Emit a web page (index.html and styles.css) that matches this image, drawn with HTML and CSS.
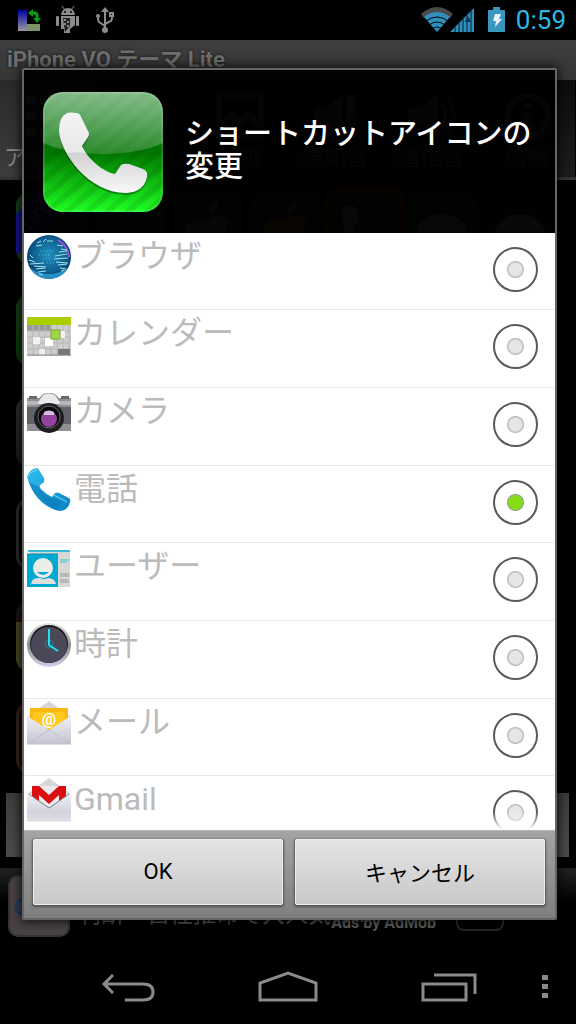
FILE: index.html
```html
<!DOCTYPE html>
<html lang="ja">
<head>
    <meta charset="UTF-8">
    <meta name="viewport" content="width=device-width, initial-scale=1.0">
    <title>iPhone VO テーマ Lite</title>
    <link rel="stylesheet" href="styles.css">
</head>
<body>
    <div class="status-bar">
        <svg width="24" height="24" viewBox="0 0 24 24">
            <defs>
                <linearGradient id="blueFade" x1="0" y1="0" x2="0" y2="1"><stop offset="0" stop-color="#0000a0"/><stop offset="1" stop-color="#9a9aa0"/></linearGradient>
            </defs>
            <rect x="1" y="2" width="9" height="21" fill="url(#blueFade)"/>
            <rect x="10" y="16" width="13" height="7" fill="#7d9468"/>
            <path d="M15 5h3q2 0 2 3v3" fill="none" stroke="#0a9a14" stroke-width="3"/>
            <path d="M11 5l5-4v8zM16 10h8l-4 5z" fill="#0a9a14"/>
        </svg>
        <svg width="26" height="28" viewBox="0 0 26 28" fill="#8c8c8c">
            <path d="M6 9q1-7 7-7t7 7z"/>
            <path d="M7 0l3 4M19 0l-3 4" stroke="#8c8c8c" stroke-width="1"/>
            <rect x="1" y="10" width="3" height="10" rx="1"/><rect x="21" y="10" width="3" height="10" rx="1"/>
            <path d="M6 10h14v9l-5 4v4h-6v-4H6z"/>
            <path d="M8 12h7v8l-5 6" fill="#222"/>
            <path d="M9 13h2v2H9zM12 15h2v2h-2zM9 17h2v2H9zM12 19h2v2h-2z"/>
            <circle cx="10" cy="6" r="1" fill="#000"/><circle cx="16" cy="6" r="1" fill="#000"/>
        </svg>
        <svg width="20" height="28" viewBox="0 0 20 28" fill="none" stroke="#8c8c8c" stroke-width="2">
            <path d="M10 4v20M10 20l-6-4q-1-1-1-5M10 18l6-3q1-1 1-5"/>
            <path d="M6 6l4-5 4 5z" fill="#8c8c8c" stroke="none"/>
            <circle cx="10" cy="24" r="3" fill="#8c8c8c" stroke="none"/>
            <circle cx="3" cy="10" r="1"/><rect x="15" y="7" width="3" height="3"/>
        </svg>
        <span class="spacer"></span>
        <svg class="signal" width="54" height="26" viewBox="0 0 54 26">
            <path d="M0 7q16-14 32 0l-3 4q-13-11-26 0z" fill="#4a4a4a"/>
            <path d="M3 10q13-10 26 0L16 25z" fill="#2f8fbd"/>
            <path d="M5 14q11-8 22 0M8 18q8-6 16 0M11 22q5-4 10 0" fill="none" stroke="#000" stroke-width="1"/>
            <path d="M29 25L53 1v24z" fill="#2f8fbd"/>
            <path d="M34 18v8M38 13v13M42 9v17M46 5v21M50 3v23" stroke="#05202c" stroke-width="1"/>
            <path d="M44 15l3-6 3 6z" fill="#0a3a50"/>
        </svg>
        <svg class="battery" width="18" height="26" viewBox="0 0 18 26">
            <path d="M0 3h5V0h7v3h5v22H0z" fill="#3a98c0"/>
            <path d="M7 7h6l-2 5h3l-7 8 1-6H5z" fill="#e8f4fa"/>
        </svg>
        <time>0:59</time>
    </div>

    <div class="app">
        <div class="app-title">iPhone VO テーマ Lite</div>
        <div class="tabs">
            <div class="tab active">
                <svg width="52" height="48" viewBox="0 0 52 48" fill="currentColor"><path d="M4 4h10v8H4zM18 4h30v8H18zM4 20h10v8H4zM18 20h30v8H18zM4 36h10v8H4zM18 36h30v8H18z"/></svg>
                <span>アイコン</span>
            </div>
            <div class="tab">
                <svg width="52" height="48" viewBox="0 0 52 48"></svg>
                <span>ドック...</span>
            </div>
            <div class="tab">
                <svg width="52" height="48" viewBox="0 0 52 48" fill="none" stroke="currentColor" stroke-width="6"><path d="M5 4h42v40H5zM8 32l10-10 8 8 8-8 12 10"/></svg>
                <span>壁紙</span>
            </div>
            <div class="tab">
                <svg width="52" height="48" viewBox="0 0 52 48" fill="currentColor"><path d="M4 16h12L33 2v44L16 32H4zM37 2h9v44h-9z"/></svg>
                <span>通知音</span>
            </div>
            <div class="tab">
                <svg width="52" height="48" viewBox="0 0 52 48" fill="currentColor"><path d="M2 16h12L32 2v44L14 32H2z"/><path d="M36 12q7 12 0 24M42 6q12 18 0 36" fill="none" stroke="currentColor" stroke-width="3"/></svg>
                <span>着信音</span>
            </div>
            <div class="tab">
                <svg width="52" height="48" viewBox="0 0 52 48" fill="currentColor"><circle cx="26" cy="24" r="20" fill="none" stroke="currentColor" stroke-width="6"/><circle cx="26" cy="14" r="4"/><path d="M20 20h10v12h3v4H20v-4h3v-8h-3z"/></svg>
                <span>情報</span>
            </div>
        </div>
        <div class="icon-grid">
            <i class="cell lite"><b>LITE</b></i><i class="cell green"></i><i class="cell">
                <svg width="52" height="60" viewBox="0 0 52 60" fill="#8a8f8d"><path d="M27 14q0-10 9-14 1 10-9 14zM26 20q14-10 22 2-10 10 2 20-10 24-24 14-14 8-22-14-4-28 22-22z"/></svg></i><i class="cell">
                <svg width="52" height="60" viewBox="0 0 52 60" fill="#a86518"><path d="M27 14q0-10 9-14 1 10-9 14zM26 20q14-10 22 2-10 10 2 20-10 24-24 14-14 8-22-14-4-28 22-22z"/></svg></i><i class="cell green selected">
                <svg width="52" height="60" viewBox="0 0 52 60" fill="#999"><path d="M4 8q8-6 14 0l4 12-8 8q8 16 20 20l8-8 8 8q0 8-10 10Q4 52 4 8z"/></svg></i><i class="cell green">
                <svg width="52" height="60" viewBox="0 0 52 60" fill="#999"><ellipse cx="26" cy="34" rx="25" ry="20"/></svg></i><i class="cell blue">
                <svg width="52" height="60" viewBox="0 0 52 60" fill="#999"><ellipse cx="26" cy="34" rx="25" ry="20"/></svg></i>
            <i class="cell green row-start"></i>
            <i class="cell row-start"></i>
            <i class="cell outlined row-start"></i>
            <i class="cell note row-start"></i>
            <i class="cell brown row-start"></i>
        </div>
        <div class="apply"></div>
        <div class="ad">
            <span class="ad-image"><svg width="40" height="40" viewBox="0 0 40 40"><circle cx="14" cy="18" r="8" fill="none" stroke="#1d3f66" stroke-width="3"/></svg></span>
            <span class="ad-text">判断・自性推命で大人気の…</span>
            <span class="ad-by">Ads by AdMob</span>
            <span class="ad-go"></span>
        </div>

        <form class="dialog" role="dialog" aria-labelledby="dialogTitle">
            <div class="dialog-head">
                <svg class="phone" width="120" height="120" viewBox="0 0 120 120">
                    <defs>
                        <linearGradient id="green" x1="0" y1="0" x2="0" y2="1"><stop offset="0" stop-color="#2d8f35"/><stop offset=".5" stop-color="#007500"/><stop offset="1" stop-color="#1eff22"/></linearGradient>
                        <linearGradient id="gloss" x1="0" y1="0" x2="0" y2="1"><stop offset="0" stop-color="#fff" stop-opacity=".42"/><stop offset="1" stop-color="#fff" stop-opacity=".17"/></linearGradient>
                        <linearGradient id="handset" x1="0" y1="0" x2="0" y2="1"><stop offset="0" stop-color="#f4f4f4"/><stop offset=".49" stop-color="#e8e8e8"/><stop offset=".51" stop-color="#d2d2d2"/><stop offset="1" stop-color="#f8f8f8"/></linearGradient>
                        <pattern id="stripes" width="13" height="13" patternUnits="userSpaceOnUse" patternTransform="rotate(50)"><rect width="6" height="13" fill="#003c00" opacity=".12"/></pattern>
                        <clipPath id="tile"><rect width="120" height="120" rx="20"/></clipPath>
                        <path id="receiver" d="M24 21q-8 4-8 18C17 60 45 101 83 101q18-1 21-16v-4q-1-3-4-4l-14-5q-5-1-8 1l-6 9C60 80 44 66 39 54l6-9q2-3 0-6l-7-14q-1-4-5-4-5-1-9 0z"/>
                    </defs>
                    <g clip-path="url(#tile)">
                        <rect width="120" height="120" fill="url(#green)"/>
                        <rect width="120" height="120" fill="url(#stripes)"/>
                        <path d="M0 0h120v51q-25 11-60 11T0 51z" fill="url(#gloss)"/>
                        <use href="#receiver" y="2" fill="#003c00" opacity=".45"/>
                        <use href="#receiver" fill="url(#handset)"/>
                    </g>
                    <rect x="1" y="1" width="118" height="118" rx="19" fill="none" stroke="#fff" stroke-opacity=".12" stroke-width="2"/>
                </svg>
                <h1 id="dialogTitle">ショートカットアイコンの変更</h1>
            </div>

            <div class="list">
                <label class="row">
                    <svg width="44" height="44" viewBox="0 0 44 44">
                        <defs><radialGradient id="globe" cx=".5" cy=".45" r=".55"><stop offset="0" stop-color="#2290bd"/><stop offset=".7" stop-color="#0d5f8e"/><stop offset="1" stop-color="#083a66"/></radialGradient></defs>
                        <circle cx="22" cy="22" r="22" fill="url(#globe)"/>
                        <path d="M3 33q19 12 38 0-6 11-19 11T3 33z" fill="#2f9fd8" opacity=".8"/>
                        <path d="M31 5q10 6 11 17" fill="none" stroke="#a050e0" stroke-width="2"/>
                        <path d="M10 8l4-2M16 7l3-3M20 6h6M9 11l6-1M3 20l3 3M2 25l6 2M3 29l14-1M7 31l12 1M9 34l9-1M11 37l8-1M12 39l4 1M28 21l12-2M27 24l14-1M29 27l12 1M31 30l9-1M33 33l6 1M34 36l3-1M32 17l8-1M34 14l6 1M30 10l6 1" stroke="#a8e4ea" stroke-width="1"/>
                        <path d="M13 16h14M12 20h12M16 24h8M20 28h7" stroke="#45b5d8" stroke-width="1" stroke-dasharray="1 2"/>
                    </svg>
                    <span>ブラウザ</span>
                    <input type="radio" name="icon">
                </label>
                <label class="row">
                    <svg width="44" height="44" viewBox="0 0 44 44">
                        <rect y="5" width="44" height="39" fill="#cdcdcd"/>
                        <rect y="13" width="24" height="6" fill="#999"/>
                        <path d="M0 19h44M0 25h44M0 31h44M0 37h44M6 13v31M12 13v31M18 13v31M24 13v31M30 13v31M36 13v31M42 13v31" stroke="#b7b7b7" stroke-width="1"/>
                        <rect y="5" width="44" height="8" fill="#a9cf00"/>
                        <rect x="6" y="25" width="7" height="7" fill="#f2f2f2"/><rect x="18" y="26" width="8" height="8" fill="#fff"/><rect x="31" y="19" width="7" height="7" fill="#f2f2f2"/><rect x="12" y="37" width="6" height="6" fill="#eee"/>
                        <rect x="24" y="18" width="9" height="9" fill="#a0d548" stroke="#7fa92e" stroke-width="1"/>
                        <rect x="31" y="37" width="12" height="6" fill="#777"/>
                        <path d="M0 43h44" stroke="#8a8a8a" stroke-width="1"/>
                    </svg>
                    <span>カレンダー</span>
                    <input type="radio" name="icon">
                </label>
                <label class="row">
                    <svg width="44" height="44" viewBox="0 0 44 44">
                        <path d="M0 8h12l4-4q6-2 12 0l4 4h12v33H0z" fill="#8d8f92"/>
                        <path d="M10 14l6-9q6-3 12 0l6 9z" fill="#e6e8ea"/>
                        <path d="M0 11h12l-2 4H0zM32 11h12v4H34z" fill="#b4b6b9"/>
                        <rect y="17" width="44" height="17" fill="#606268"/>
                        <path d="M2 6h8v3H2zM34 6h8v3h-8z" fill="#66696d"/>
                        <circle cx="22" cy="28" r="15" fill="#1d1d20"/>
                        <circle cx="22" cy="27" r="11" fill="#050507" stroke="#66666a" stroke-width="1"/>
                        <circle cx="22" cy="29" r="8" fill="#92449c"/>
                        <path d="M17 22q5-3 10 0v3H17z" fill="#d6bfdc"/>
                    </svg>
                    <span>カメラ</span>
                    <input type="radio" name="icon">
                </label>
                <label class="row">
                    <svg width="44" height="44" viewBox="0 0 44 44">
                        <defs><linearGradient id="blueCall" x1="0" y1="0" x2="1" y2="1"><stop offset="0" stop-color="#2fc0f0"/><stop offset="1" stop-color="#0a80c4"/></linearGradient></defs>
                        <path d="M0 9Q2 2 9 0q2 0 3 2l5 8q1 3-1 5l-3 2q-1 2 1 4 5 5 11 8l3-4q2-1 4 0l10 5q2 2 1 4-2 9-11 9Q8 37 0 9z" fill="url(#blueCall)"/>
                        <path d="M2 14q6 18 28 28l4-8-9-4q-9-3-13-11z" fill="#0a6fb0" opacity=".5"/>
                        <path d="M1 9q3-6 9-7M27 27l13 7" fill="none" stroke="#7adcf8" stroke-width="1"/>
                    </svg>
                    <span>電話</span>
                    <input type="radio" name="icon" checked>
                </label>
                <label class="row">
                    <svg width="44" height="44" viewBox="0 0 44 44">
                        <path d="M1 5h42v37H31z" fill="#d8d8d4"/>
                        <path d="M1 5h42v2H1z" fill="#38bbdb"/>
                        <rect x="0" y="9" width="31" height="33" fill="#00a9cf"/>
                        <path d="M0 9h31" stroke="#0b8cad" stroke-width="1"/>
                        <circle cx="16" cy="23" r="10" fill="#ecece8"/>
                        <path d="M10 27h12q-6 6-12 0z" fill="#00a9cf"/>
                        <path d="M4 39q1-7 9-6 4 2 8 0 7 0 8 6z" fill="#dededa"/>
                        <path d="M33 15h9M33 17h7" stroke="#4abdd6" stroke-width="1"/>
                        <path d="M33 29h9M33 31h9M33 35h8M33 37h9" stroke="#999" stroke-width="1"/>
                    </svg>
                    <span>ユーザー</span>
                    <input type="radio" name="icon">
                </label>
                <label class="row">
                    <svg width="44" height="44" viewBox="0 0 44 44">
                        <defs><linearGradient id="rim" x1="0" y1="0" x2="0" y2="1"><stop offset="0" stop-color="#e6e6e6"/><stop offset=".5" stop-color="#898989"/><stop offset="1" stop-color="#d2d0ea"/></linearGradient></defs>
                        <circle cx="22" cy="22" r="22" fill="url(#rim)"/>
                        <circle cx="22" cy="21" r="19" fill="#1c1c20"/>
                        <circle cx="22" cy="22" r="18" fill="#4b4857"/>
                        <circle cx="22" cy="21" r="4" fill="none" stroke="#207e88" stroke-width="1"/>
                        <path d="M22 6v16l9 6" fill="none" stroke="#1ee4f4" stroke-width="2"/>
                    </svg>
                    <span>時計</span>
                    <input type="radio" name="icon">
                </label>
                <label class="row">
                    <svg width="44" height="44" viewBox="0 0 44 44">
                        <defs><linearGradient id="paper" x1="0" y1="0" x2="0" y2="1"><stop offset="0" stop-color="#f0f0f5"/><stop offset="1" stop-color="#c4c4d2"/></linearGradient></defs>
                        <path d="M0 16L22 0l22 16z" fill="#ddd3d6"/>
                        <path d="M3 7h38v20H3z" fill="#f9b714"/>
                        <path d="M6 11h32v18H6z" fill="#ffc81f"/>
                        <text class="at" x="22" y="24" text-anchor="middle">@</text>
                        <path d="M0 15l22 14 22-14v28H0z" fill="url(#paper)"/>
                        <path d="M0 43l22-14 22 14M0 43h44" fill="none" stroke="#c0c0cd" stroke-width="1"/>
                    </svg>
                    <span>メール</span>
                    <input type="radio" name="icon">
                </label>
                <label class="row">
                    <svg width="44" height="44" viewBox="0 0 44 44">
                        <path d="M0 16L22 0l22 16z" fill="#d5d5da"/>
                        <path d="M5 8h34v19L22 31 5 24z" fill="#e9e9ee"/>
                        <path d="M5 24V8h7l10 9 10-9h7v16l-7 4V17l-10 9-10-9v11z" fill="#dc0d10"/>
                        <path d="M0 15l22 15 22-15v28H0z" fill="url(#paper)"/>
                        <path d="M2 16l20 14 20-14" fill="none" stroke="#77777f" stroke-width="1"/>
                        <path d="M0 43h44" stroke="#b0b0bf" stroke-width="1"/>
                    </svg>
                    <span>Gmail</span>
                    <input type="radio" name="icon">
                </label>
            </div>

            <div class="buttons">
                <button type="button">OK</button>
                <button type="button">キャンセル</button>
            </div>
        </form>
    </div>

    <div class="nav-bar">
        <button type="button" aria-label="戻る">
            <svg width="64" height="36" viewBox="0 0 64 36" fill="none" stroke="#8a8a8a" stroke-width="3"><path d="M18 5L9 14l9 9M9 14h39q10 0 10 8t-10 8H30"/></svg>
        </button>
        <button type="button" aria-label="ホーム">
            <svg width="64" height="36" viewBox="0 0 64 36" fill="none" stroke="#8a8a8a" stroke-width="3"><path d="M4 30V13l28-10 28 10v17z"/></svg>
        </button>
        <button type="button" aria-label="最近">
            <svg width="64" height="36" viewBox="0 0 64 36" fill="none" stroke="#8a8a8a" stroke-width="3"><path d="M6 14h43v16H6zM17 5h41v19"/></svg>
        </button>
        <button type="button" class="menu" aria-label="メニュー">
            <svg width="6" height="26" viewBox="0 0 6 26" fill="#8a8a8a"><path d="M0 1h6v5H0zM0 10h6v5H0zM0 19h6v5H0z"/></svg>
        </button>
    </div>
</body>
</html>
```

FILE: styles.css
```css
* {
    box-sizing: border-box;
}

body {
    margin: 0;
    height: 100vh;
    display: flex;
    flex-direction: column;
    background: #000;
    color: #fff;
    font-family: Roboto, "Noto Sans CJK JP", sans-serif;
    overflow: hidden;
}

svg {
    display: block;
    flex: none;
}

.status-bar {
    height: 40px;
    flex: none;
    display: flex;
    align-items: center;
    gap: 14px;
    padding: 0 10px 0 17px;
}

.status-bar time {
    color: #33b5e5;
    font-size: 26px;
    line-height: 40px;
}

.spacer {
    flex: 1;
}

.signal {
    margin-right: -1px;
}

.battery {
    margin-right: -4px;
}

.app {
    position: relative;
    flex: 1;
    min-height: 0;
    display: flex;
    flex-direction: column;
}

.app-title {
    height: 40px;
    flex: none;
    padding-left: 7px;
    background: linear-gradient(#3e3e3e, #363636);
    color: #6e6e6e;
    font-size: 22px;
    font-weight: bold;
    line-height: 40px;
    text-shadow: 0 0 3px #111;
}

/* tabs */
.tabs {
    height: 100px;
    flex: none;
    display: grid;
    grid-template-columns: repeat(6, 1fr);
    border-bottom: 3px solid #333;
}

.tab {
    display: flex;
    flex-direction: column;
    align-items: center;
    padding-top: 12px;
    border-right: 1px solid #000;
    background: linear-gradient(#0d0d0d, #1c1c1c);
    color: #666;
    font-size: 22px;
    line-height: 36px;
    white-space: nowrap;
}

.tab.active {
    background: linear-gradient(#2a2a2a, #3c3c3c);
    color: #888;
}

/* launcher icons */
.icon-grid {
    flex: 1;
    display: grid;
    grid-template-columns: repeat(7, 1fr);
    grid-auto-rows: 72px;
    gap: 30px 7px;
    padding: 12px 20px 0 16px;
}

.cell {
    display: flex;
    justify-content: center;
    overflow: hidden;
    padding-top: 8px;
    border-radius: 14px;
    background: linear-gradient(#333, #181818);
    font-style: normal;
}

.row-start {
    grid-column-start: 1;
}

.cell.green {
    background: linear-gradient(#1c3a1c, #063c06);
}

.cell.blue {
    background: #0c1840;
}

.cell.lite {
    background: linear-gradient(135deg, #184018 15%, #14148a 15%, #14148a 45%, #184018 45%);
}

.cell.lite b {
    color: #777;
    font-size: 16px;
    transform: rotate(-45deg);
}

.cell.outlined {
    background: #050505;
    border: 3px solid #2a2a2a;
}

.cell.note {
    background: linear-gradient(#1c1410 30%, #4a4826 30%);
}

.cell.brown {
    background: #15100c;
    border: 3px solid #30241a;
}

.cell.selected {
    outline: 6px solid #6a3205;
}

.apply {
    height: 64px;
    flex: none;
    margin: 0 7px 11px 6px;
    background: linear-gradient(#3c3c3c, #4c4c4c);
}

.ad {
    height: 84px;
    flex: none;
    display: flex;
    align-items: flex-start;
    gap: 8px;
    padding: 7px 72px 0 8px;
    background: linear-gradient(#222, #000 40%);
}

.ad-image {
    width: 62px;
    height: 62px;
    flex: none;
    padding-top: 12px;
    border: 2px solid #333;
    border-radius: 10px;
    background: #484146;
}

.ad-text {
    flex: none;
    margin-right: -96px;
    padding-top: 20px;
    color: #555;
    font-size: 23px;
    line-height: 40px;
}

.ad-by {
    margin-left: auto;
    padding-top: 36px;
    color: #5c5c5c;
    font-size: 16px;
    font-weight: bold;
    line-height: 24px;
    white-space: nowrap;
}

.ad-go {
    width: 48px;
    height: 56px;
    flex: none;
    margin-left: 12px;
    border: 2px solid #262626;
    border-radius: 8px;
}

/* dialog */
.dialog {
    position: absolute;
    inset: 28px 19px 32px 22px;
    display: flex;
    flex-direction: column;
    border: 2px solid #666;
    border-radius: 2px;
    box-shadow: 0 0 12px #000;
}

.dialog-head {
    height: 163px;
    flex: none;
    display: flex;
    align-items: center;
    gap: 22px;
    padding: 0 19px;
    background: rgba(0, 0, 0, 0.95);
}

.dialog-head h1 {
    margin: 0;
    padding-bottom: 2px;
    font-size: 29px;
    font-weight: 500;
    line-height: 33px;
}

.list {
    position: relative;
    flex: 1;
    min-height: 0;
    overflow: hidden;
    display: grid;
    grid-auto-rows: 77px 78px 78px;
    padding: 0 1px;
    background: #fff;
}

/* scroll fade at the bottom edge */
.list::after {
    content: "";
    position: absolute;
    inset: auto 0 0;
    height: 18px;
    background: linear-gradient(rgba(255, 255, 255, 0), #fff);
}

.row {
    display: flex;
    align-items: flex-start;
    gap: 3px;
    padding: 2px 16px 0 2px;
    border-bottom: 1px solid #e8e8e8;
    color: #bbb;
    font-size: 32px;
    line-height: 42px;
}

.row span {
    flex: 1;
}

.row input {
    appearance: none;
    width: 45px;
    height: 45px;
    flex: none;
    margin: 12px 0 0;
    border: 2px solid #5a5a5a;
    border-radius: 50%;
    background: radial-gradient(circle, #e6e6e6 6px, #bbb 8px, #fff 9px);
}

.row input:checked {
    background: radial-gradient(circle, #86dc18 7px, #999 8px, #fff 9px);
}

.row .at {
    fill: #fff;
    font-family: Roboto, sans-serif;
    font-size: 16px;
    font-weight: bold;
}

.buttons {
    flex: none;
    display: flex;
    gap: 12px;
    padding: 8px 10px 13px 9px;
    border-top: 1px solid #b4b4b4;
    background: linear-gradient(#a4a4a4, #7e7e7e);
}

.buttons button {
    flex: 1;
    height: 66px;
    padding: 0 0 2px;
    border: 1px solid #eee;
    border-radius: 2px;
    background: linear-gradient(#e4e4e4, #c8c8c8);
    box-shadow: 0 1px 2px 1px #555;
    color: #000;
    font-family: inherit;
    font-size: 22px;
}

.nav-bar {
    position: relative;
    height: 72px;
    flex: none;
    display: flex;
    justify-content: center;
    gap: 97px;
    background: #000;
}

.nav-bar button {
    padding: 0;
    border: none;
    background: none;
}

.nav-bar .menu {
    position: absolute;
    right: 28px;
    top: 22px;
}
```
